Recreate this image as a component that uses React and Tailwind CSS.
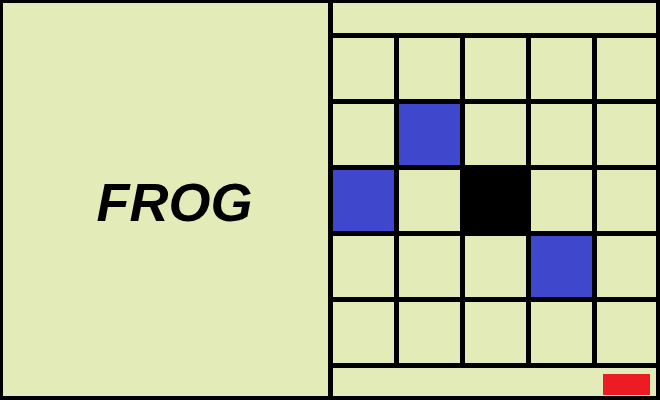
import React from 'react';

const BLUE = [[1, 1], [2, 0], [3, 3]];
const BLACK = [[2, 2]];

const cellColor = (r, c) => {
    if (BLUE.some(([a, b]) => a === r && b === c)) return 'bg-[#3f48cc]';
    if (BLACK.some(([a, b]) => a === r && b === c)) return 'bg-black';
    return 'bg-[#e3ebb9]';
};

const App = () => {
    const rows = [0, 1, 2, 3, 4];
    const cols = [0, 1, 2, 3, 4];

    return (
        <div className="w-[660px] h-[400px] bg-black pl-[3px] pt-[3px] pr-[4px] pb-[4px] flex gap-[5px]">
            {/* title panel */}
            <div className="w-[325px] h-full bg-[#e3ebb9] flex items-center justify-center pl-[18px] pt-[4px]">
                <span
                    className="text-[54px] font-bold italic text-black leading-none"
                    style={{ fontFamily: '"Liberation Sans", Arial, sans-serif' }}
                >
                    FROG
                </span>
            </div>

            {/* board */}
            <div className="w-[323px] h-full flex flex-col gap-[5px]">
                <div className="h-[30px] bg-[#e3ebb9]"></div>
                <div className="grid grid-cols-[61px_61px_61px_61px_59px] grid-rows-[61px_61px_61px_61px_61px] gap-[5px]">
                    {rows.map((r) =>
                        cols.map((c) => (
                            <div key={`${r}-${c}`} className={cellColor(r, c)}></div>
                        ))
                    )}
                </div>
                <div className="h-[28px] bg-[#e3ebb9] flex justify-end pt-[6px] pr-[6px]">
                    <div className="w-[47px] h-[21px] bg-[#ed1c24]"></div>
                </div>
            </div>
        </div>
    );
};

export default App;
